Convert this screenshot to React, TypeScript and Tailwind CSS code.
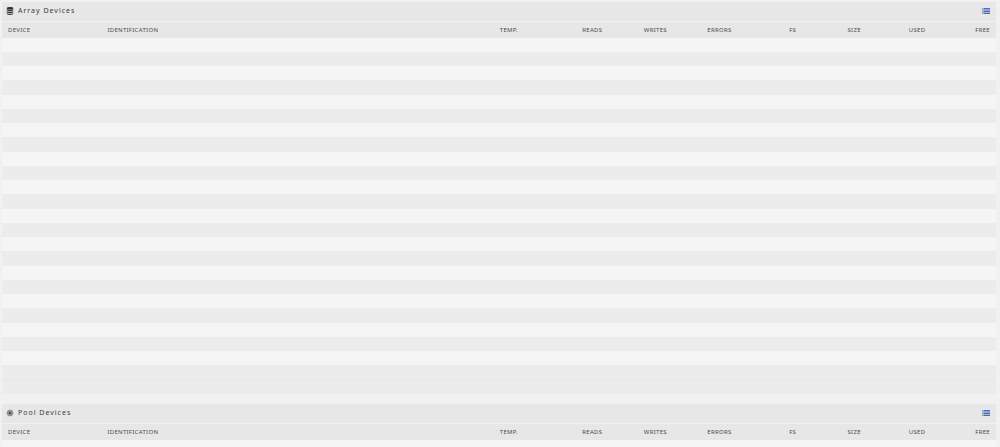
import React from 'react';

interface Column {
  label: string;
  className: string;
}

const columns: Column[] = [
  { label: 'Device', className: 'w-[10%] text-left' },
  { label: 'Identification', className: 'text-left' },
  { label: 'Temp.', className: 'w-[6.5%] text-right' },
  { label: 'Reads', className: 'w-[8.5%] text-right' },
  { label: 'Writes', className: 'w-[6.5%] text-right' },
  { label: 'Errors', className: 'w-[6.5%] text-right' },
  { label: 'FS', className: 'w-[6.5%] text-right' },
  { label: 'Size', className: 'w-[6.5%] text-right' },
  { label: 'Used', className: 'w-[6.5%] text-right' },
  { label: 'Free', className: 'w-[6.5%] text-right' },
];

function DatabaseIcon() {
  return (
    <svg className="h-2 w-2" viewBox="0 0 16 16" fill="#2b2b2b" aria-hidden="true">
      <ellipse cx="8" cy="2.5" rx="6.5" ry="2.5" />
      <path d="M1.500 4c1.500 1.300 4 1.800 6.500 1.800s5-.5 6.500-1.800v2c0 1.400-2.900 2.300-6.500 2.300s-6.500-.9-6.500-2.300z" />
      <path d="M1.500 8c1.500 1.300 4 1.800 6.500 1.800s5-.5 6.500-1.800v2c0 1.400-2.900 2.300-6.500 2.300s-6.500-.9-6.500-2.300z" />
      <path d="M1.500 12c1.500 1.300 4 1.800 6.500 1.800s5-.5 6.500-1.800v1.700c0 1.400-2.900 2.300-6.500 2.300s-6.500-.9-6.500-2.300z" />
    </svg>
  );
}

function PoolIcon() {
  return (
    <svg className="h-2 w-2" viewBox="0 0 16 16" fill="none" aria-hidden="true">
      <circle cx="8" cy="8" r="6" fill="#a3a3a3" stroke="#8a8a8a" strokeWidth="1.5" />
      <circle cx="8" cy="8" r="4" stroke="#808080" strokeWidth="1.5" />
      <circle cx="8" cy="8" r="2" fill="#2b2b2b" />
    </svg>
  );
}

function ListIcon() {
  return (
    <svg className="h-[6px] w-2" viewBox="0 0 16 12" aria-hidden="true">
      <path d="M0 0h16v12H0z" fill="#a3b4db" />
      <path d="M0 0h3v2H0zM0 6h3v2H0zM0 10h3v2H0z" fill="#8ba1d3" />
      <path d="M4 0h12v2H4zM4 6h12v2H4zM4 10h12v2H4z" fill="#4a6cbc" />
      <path d="M4 3h12v2H4z" fill="#7f97cf" />
    </svg>
  );
}

interface DeviceSectionProps {
  title: string;
  icon: React.ReactNode;
  rows: number;
  hasTotal?: boolean;
}

function DeviceSection({ title, icon, rows, hasTotal }: DeviceSectionProps) {
  return (
    <section>
      <div className="mb-px flex h-[19px] items-center justify-between bg-[#e7e7e7] pr-[6px] pb-px pl-1">
        <h2 className="flex items-center gap-1 text-[7px] leading-[10px] tracking-[1px] text-[#3c3c3c]">
          {icon}
          {title}
        </h2>
        <button type="button" aria-label={`Toggle ${title} view`} className="flex cursor-pointer">
          <ListIcon />
        </button>
      </div>
      <table className="w-full table-fixed border-collapse">
        <thead>
          <tr className="h-4 bg-[#e7e7e7]">
            {columns.map((column) => (
              <th
                key={column.label}
                scope="col"
                className={`px-[6px] py-0 text-[6px] leading-[8px] font-normal tracking-wider text-[#4a4a4a] uppercase ${column.className}`}
              >
                {column.label}
              </th>
            ))}
          </tr>
        </thead>
        <tbody>
          {Array.from({ length: rows }, (_, index) => (
            <tr key={index} className="h-[14px] odd:bg-[#f5f5f5] even:bg-[#ececec] nth-[4n]:h-[15px]">
              <td colSpan={columns.length} className="p-0" />
            </tr>
          ))}
        </tbody>
        {hasTotal && (
          <tfoot>
            <tr className="h-[14px] bg-[#ececec]">
              <td colSpan={columns.length} className="p-0 shadow-[inset_0_1px_#e7e7e7]" />
            </tr>
          </tfoot>
        )}
      </table>
    </section>
  );
}

export default function App() {
  return (
    <main className="h-screen overflow-hidden bg-[#f1f1f1] font-['Noto_Sans',sans-serif]">
      <div className="flex flex-col gap-[10px] pt-[2px] pr-1 pl-[2px]">
        <DeviceSection title="Array Devices" icon={<DatabaseIcon />} rows={24} hasTotal />
        <DeviceSection title="Pool Devices" icon={<PoolIcon />} rows={2} />
      </div>
    </main>
  );
}
